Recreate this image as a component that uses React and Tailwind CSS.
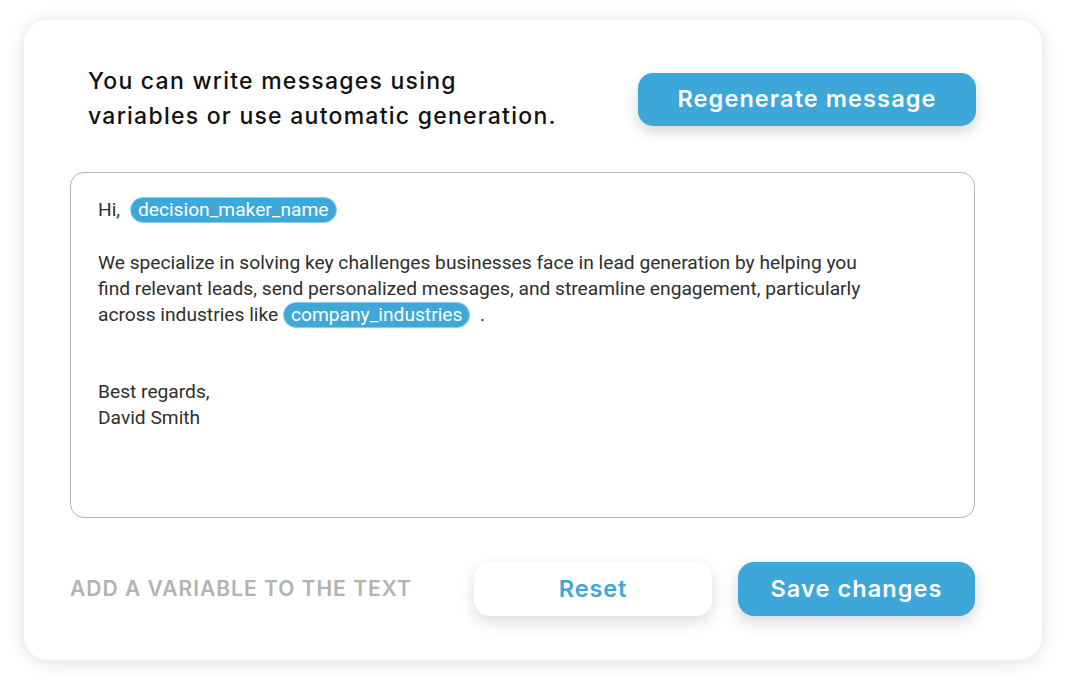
import React from 'react';

const heading = { fontFamily: 'Inter, "Open Sans", sans-serif' };
const body = { fontFamily: 'Roboto, "Liberation Sans", sans-serif' };

function Chip({ children }) {
  return (
    <span className="inline-block rounded-full border border-[#8ccbe9] bg-[#3ea8da] px-[7px] leading-[24px] text-white">
      {children}
    </span>
  );
}

export default function App() {
  return (
    <div className="min-h-screen w-full bg-white pl-[24px] pt-[20px]">
      <div className="w-[1018px] h-[640px] rounded-[24px] bg-white pl-[46px] pt-[44px] shadow-[0_2px_18px_rgba(0,0,0,0.13)]">
        <div className="w-[905px]">
          {/* header */}
          <div className="flex items-center justify-between pl-[18px]" style={heading}>
            <p className="text-[23px] font-medium leading-[35px] tracking-[1.25px] text-[#111]">
              You can write messages using
              <br />
              variables or use automatic generation.
            </p>
            <button className="mr-[-1px] h-[53px] w-[338px] rounded-[15px] bg-[#3ca7d8] text-[23.5px] font-semibold tracking-[1.1px] text-white shadow-[0_6px_14px_rgba(0,0,0,0.16)]">
              Regenerate message
            </button>
          </div>

          {/* message box */}
          <div
            className="mt-[38px] h-[346px] rounded-[14px] border border-[#b5b5b5] pl-[27px] pt-[24px] text-[19.2px] leading-[26px] text-[#2e2e2e]"
            style={body}
          >
            <div>
              Hi, <span className="ml-[5px]"><Chip>decision_maker_name</Chip></span>
            </div>
            <div className="h-[27px]" />
            <div>
              We specialize in solving key challenges businesses face in lead generation by helping you
              <br />
              find relevant leads, send personalized messages, and streamline engagement, particularly
              <br />
              across industries like <Chip>company_industries</Chip> &nbsp;.
            </div>
            <div className="h-[51px]" />
            <div>Best regards,</div>
            <div>David Smith</div>
          </div>

          {/* footer */}
          <div className="mt-[44px] flex items-center" style={heading}>
            <span className="text-[21px] font-semibold uppercase tracking-[1px] text-[#b3b3b3]">Add a variable to the text</span>
            <div className="ml-auto flex gap-[26px]">
              <button className="h-[54px] w-[238px] rounded-[16px] bg-white text-[23.5px] font-semibold tracking-[0.9px] text-[#3ca7d8] shadow-[0_6px_16px_rgba(0,0,0,0.14)]">
                Reset
              </button>
              <button className="h-[54px] w-[237px] rounded-[16px] bg-[#3ca7d8] text-[23.5px] font-semibold tracking-[1.1px] text-white shadow-[0_6px_16px_rgba(0,0,0,0.16)]">
                Save changes
              </button>
            </div>
          </div>
        </div>
      </div>
    </div>
  );
}
